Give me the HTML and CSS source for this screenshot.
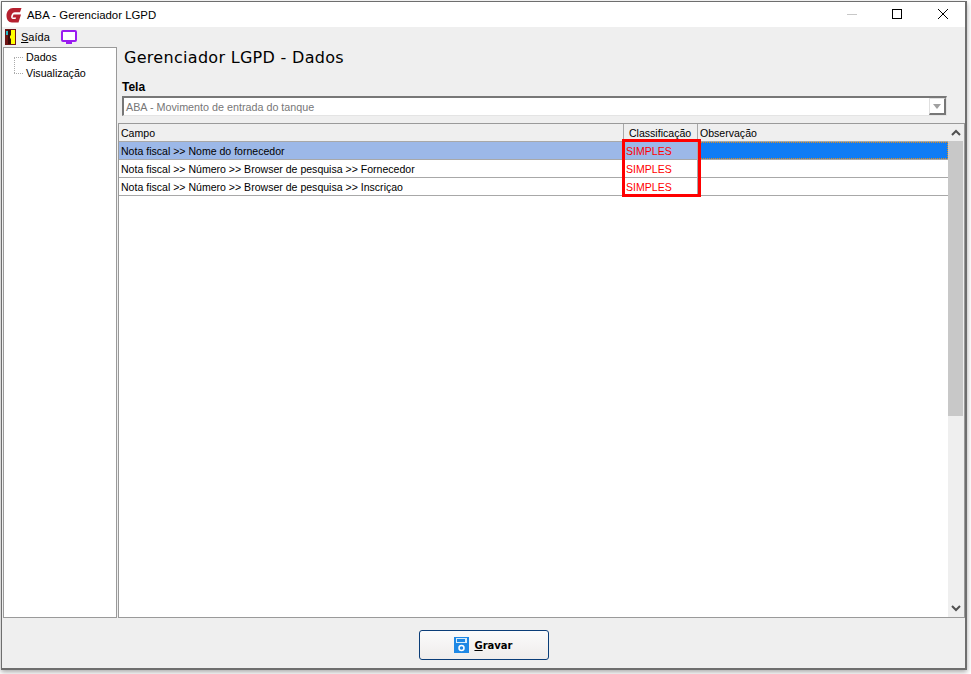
FILE: index.html
```html
<!DOCTYPE html>
<html lang="pt-BR">
<head>
  <meta charset="UTF-8">
  <title>ABA - Gerenciador LGPD</title>
  <link rel="stylesheet" href="styles.css">
</head>
<body>

<div class="window">
  <div class="titlebar">
    <svg class="app-icon" width="16" height="16" viewBox="0 0 16 16">
      <path d="M15.500 1H7C3.500 1 .5 4.500 .5 8.500c0 4 2 7 5.500 7h6.500L15 7.500H7.500l-1 3h3.700l-.7 1.500H7C5.500 12 4.800 10.500 5.200 9 5.800 6.800 7 5.300 9 5.300h5z" fill="#b5202f"/>
    </svg>
    <span class="title">ABA - Gerenciador LGPD</span>
    <div class="win-buttons">
      <svg width="46" height="25" viewBox="0 0 46 25"><path d="M20 12.500h10" stroke="#c8c8c8"/></svg>
      <svg width="46" height="25" viewBox="0 0 46 25"><rect x="19.500" y="7.500" width="9" height="9" fill="none" stroke="#000"/></svg>
      <svg width="46" height="25" viewBox="0 0 46 25"><path d="M19 7l10 10M29 7L19 17" stroke="#000" fill="none"/></svg>
    </div>
  </div>

  <div class="menubar">
    <svg width="11" height="16" viewBox="0 0 11 16">
      <rect width="11" height="16" fill="#6e1414"/>
      <rect x="3" y="1" width="7" height="14" fill="#ffff00"/>
      <rect x="1" y="2" width="2" height="4" fill="#28b8c8"/>
      <path d="M3 1h3v5l-1 1v2l1 1v5H3z" fill="#3a0a0a"/>
      <path d="M7 1h3v14H7z" fill="#ffff00"/>
    </svg>
    <span class="menu-item"><u>S</u>aída</span>
    <svg class="monitor" width="16" height="14" viewBox="0 0 16 14">
      <rect x="1" y="1" width="14" height="10" rx="1" fill="#fff" stroke="#9a1cf0" stroke-width="2"/>
      <rect x="5" y="12" width="6" height="2" fill="#9a1cf0"/>
    </svg>
  </div>

  <div class="content">
    <div class="tree">
      <div class="tree-item">Dados</div>
      <div class="tree-item">Visualização</div>
    </div>

    <div class="pane">
      <h1 class="heading">Gerenciador LGPD - Dados</h1>
      <div class="field-label">Tela</div>
      <div class="combo">
        <span class="combo-text">ABA - Movimento de entrada do tanque</span>
        <span class="combo-arrow"></span>
      </div>

      <div class="grid">
        <div class="grid-main">
          <div class="row head">
            <div class="cell c1">Campo</div>
            <div class="cell c2">Classificação</div>
            <div class="cell c3">Observação</div>
          </div>
          <div class="row selected">
            <div class="cell c1">Nota fiscal &gt;&gt; Nome do fornecedor</div>
            <div class="cell c2 red">SIMPLES</div>
            <div class="cell c3"></div>
          </div>
          <div class="row">
            <div class="cell c1">Nota fiscal &gt;&gt; Número &gt;&gt; Browser de pesquisa &gt;&gt; Fornecedor</div>
            <div class="cell c2 red">SIMPLES</div>
            <div class="cell c3"></div>
          </div>
          <div class="row">
            <div class="cell c1">Nota fiscal &gt;&gt; Número &gt;&gt; Browser de pesquisa &gt;&gt; Inscriçao</div>
            <div class="cell c2 red">SIMPLES</div>
            <div class="cell c3"></div>
          </div>
          <div class="highlight"></div>
        </div>
        <div class="scrollbar">
          <svg width="16" height="17" viewBox="0 0 16 17"><path d="M4 11l4-4 4 4" fill="none" stroke="#505050" stroke-width="2"/></svg>
          <div class="thumb-track"><div class="thumb"></div></div>
          <svg width="16" height="18" viewBox="0 0 16 18"><path d="M4 7l4 4 4-4" fill="none" stroke="#505050" stroke-width="2"/></svg>
        </div>
      </div>
    </div>
  </div>

  <div class="footer">
    <button class="btn-save">
      <svg width="15" height="16" viewBox="0 0 15 16">
        <rect width="15" height="16" fill="#1e88e5"/>
        <rect x="2" y="1" width="11" height="5" fill="#d8ecfa"/>
        <rect x="3" y="2" width="8" height="3" fill="#1e88e5"/>
        <circle cx="7.500" cy="11" r="2.500" fill="#1e88e5" stroke="#fff" stroke-width="1.500"/>
      </svg>
      <span><u>G</u>ravar</span>
    </button>
  </div>
</div>

</body>
</html>
```

FILE: styles.css
```css
body {
  margin: 0;
  height: 674px;
  overflow: hidden;
  background: #fff;
  font-family: "Liberation Sans", Arial, sans-serif;
  font-size: 11px;
  color: #000;
}

.window {
  margin: 1px 0 0 1px;
  width: 966px;
  height: 669px;
  box-sizing: border-box;
  border: 1px solid #6e6e6e;
  border-width: 1px 2px 2px 1px;
  background: #efefef;
  box-shadow: 0 2px 5px rgba(0, 0, 0, 0.35);
  display: flex;
  flex-direction: column;
}

.titlebar {
  height: 25px;
  background: #fff;
  display: flex;
  align-items: center;
  padding-left: 4px;
  flex-shrink: 0;
}

.app-icon {
  margin-right: 5px;
}

.title {
  flex: 1;
  font-size: 11.4px;
}

.win-buttons {
  display: flex;
  height: 25px;
}

.menubar {
  height: 20px;
  display: flex;
  align-items: center;
  padding-left: 3px;
  flex-shrink: 0;
}

.menu-item {
  margin-left: 5px;
  font-size: 11px;
}

.monitor {
  margin-left: 11px;
}

.content {
  flex: 1;
  display: flex;
  min-height: 0;
  padding-left: 1px;
  gap: 1px;
}

.tree {
  width: 114px;
  box-sizing: border-box;
  background: #fff;
  border: 1px solid #9a9a9a;
  padding-top: 1px;
  font-size: 10.7px;
}

.tree-item {
  height: 16px;
  line-height: 16px;
  padding-left: 22px;
  background:
    repeating-linear-gradient(90deg, #aaa 0 1px, transparent 1px 2px) 10px 8px / 10px 1px no-repeat,
    repeating-linear-gradient(0deg, #aaa 0 1px, transparent 1px 2px) 10px 8px / 1px 8px no-repeat;
}

.tree-item:last-child {
  background-position: 10px 8px, 10px 0;
}

.pane {
  flex: 1;
  min-width: 0;
  display: flex;
  flex-direction: column;
}

.heading {
  margin: 0;
  padding: 1px 0 0 6px;
  height: 27px;
  box-sizing: border-box;
  font-family: "DejaVu Sans", sans-serif;
  font-size: 16px;
  font-weight: normal;
  line-height: 20px;
  letter-spacing: 0.3px;
}

.field-label {
  margin: 5px 0 0 4px;
  height: 16px;
  line-height: 16px;
  font-weight: bold;
  font-size: 12px;
}

.combo {
  margin: 1px 0 0 4px;
  width: 825px;
  height: 20px;
  box-sizing: border-box;
  background: #fff;
  border: 1px solid #e4e4e4;
  border-top: 2px solid #777;
  border-left: 2px solid #777;
  display: flex;
  align-items: center;
  justify-content: space-between;
  color: #777;
  font-size: 10.75px;
  padding-left: 2px;
}

.combo-arrow {
  width: 17px;
  height: 17px;
  box-sizing: border-box;
  border: 1px solid #e0e0e0;
  border-right: 2px solid #777;
  border-bottom: 2px solid #777;
  position: relative;
}

.combo-arrow::after {
  content: "";
  position: absolute;
  left: 3px;
  top: 5px;
  border: 4px solid transparent;
  border-top: 5px solid #a0a0a0;
}

.grid {
  margin: 7px 0 0 0;
  flex: 1;
  min-height: 0;
  box-sizing: border-box;
  border: 1px solid #9a9a9a;
  background: #fff;
  display: flex;
  width: 847px;
}

.grid-main {
  flex: 1;
  position: relative;
}

.row {
  display: flex;
  height: 18px;
  box-sizing: border-box;
  border-bottom: 1px solid #a8a8a8;
}

.row.head {
  background: #efefef;
}

.cell {
  line-height: 17px;
  padding: 1px 0 0 2px;
  box-sizing: border-box;
  border-right: 1px solid #a8a8a8;
  white-space: nowrap;
  overflow: hidden;
  font-size: 10.55px;
}

.c1 { width: 505px; }
.c2 { width: 74px; }
.c3 { flex: 1; border-right: 0; }

.head .c2 { padding-left: 5px; }

.row.selected { background: #9cb8e8; }
.row.selected .c3 {
  background: #0f7cf5;
  outline: 1px dotted #e09020;
  outline-offset: -1px;
}

.red { color: #f00; }

.highlight {
  position: absolute;
  left: 503px;
  top: 15px;
  width: 79px;
  height: 58px;
  box-sizing: border-box;
  border: 3px solid #f00;
}

.scrollbar {
  width: 16px;
  background: #efefef;
  display: flex;
  flex-direction: column;
  flex-shrink: 0;
}

.thumb-track {
  flex: 1;
}

.thumb {
  height: 275px;
  margin-right: 1px;
  background: #c8c8c8;
}

.footer {
  height: 50px;
  box-sizing: border-box;
  flex-shrink: 0;
  display: flex;
  justify-content: center;
  align-items: flex-start;
  padding-top: 12px;
}

.btn-save {
  width: 130px;
  height: 30px;
  box-sizing: border-box;
  border: 1px solid #0a3d78;
  border-radius: 3px;
  background: linear-gradient(#fbfbfb, #efeceb);
  display: flex;
  align-items: center;
  justify-content: center;
  gap: 5px;
  font-family: "DejaVu Sans", sans-serif;
  font-weight: bold;
  font-size: 10px;
  padding: 0;
}
```
